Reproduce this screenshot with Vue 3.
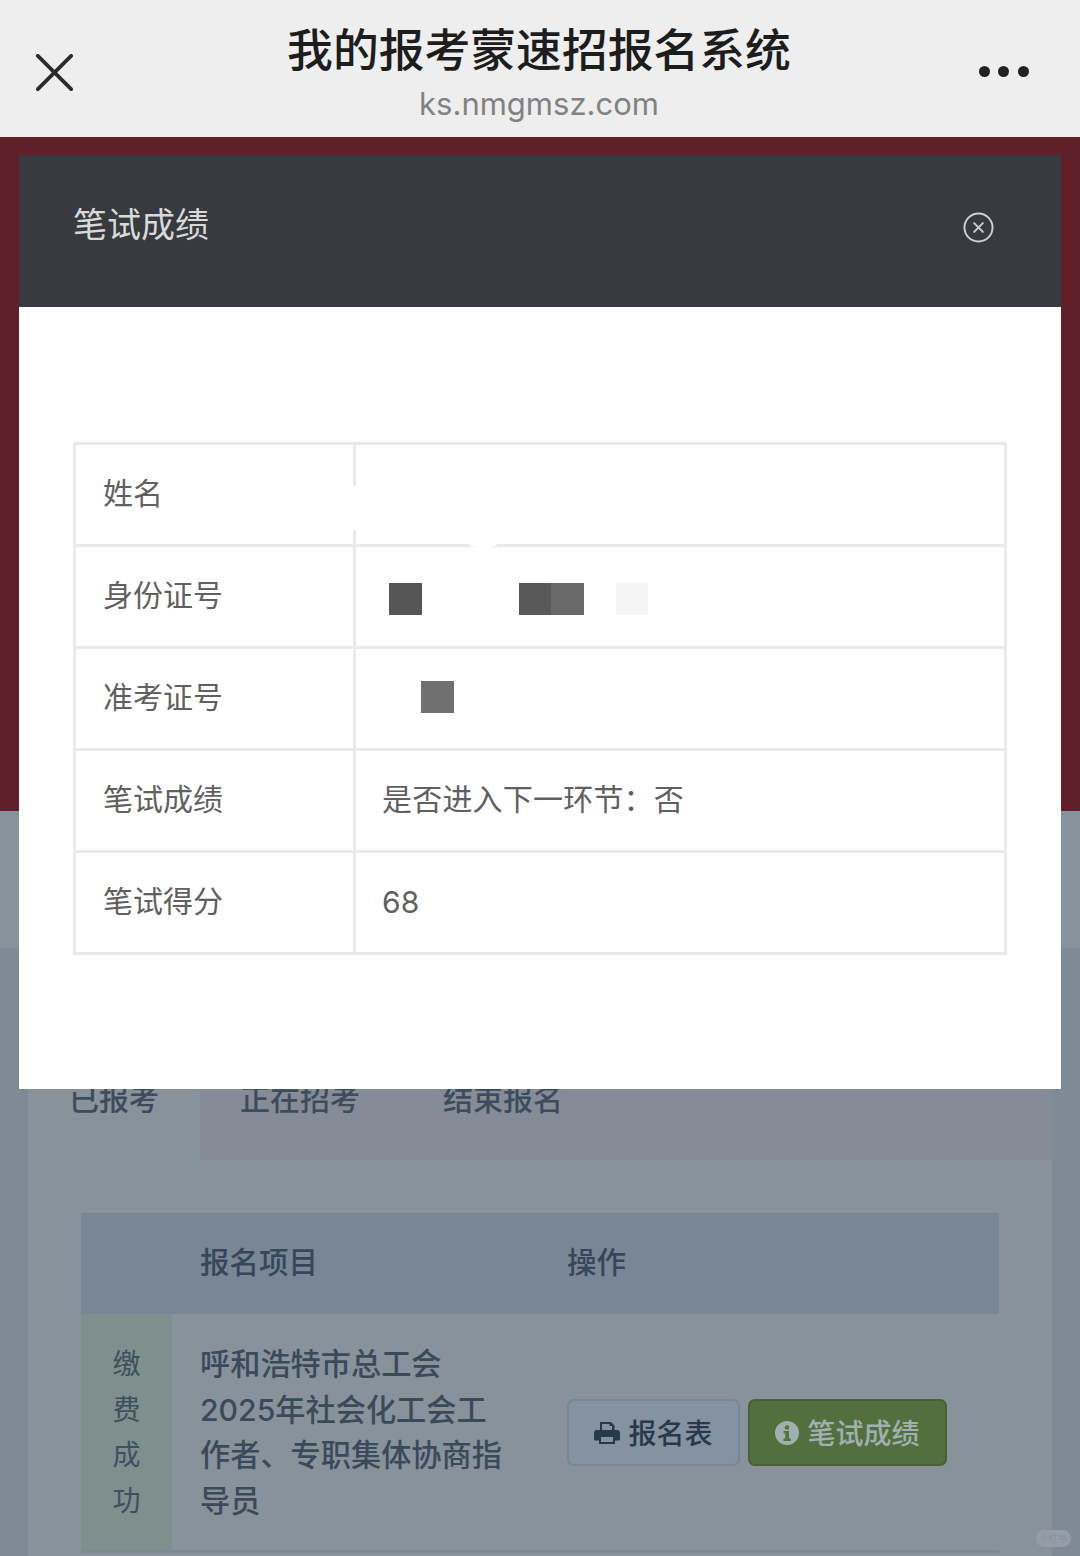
<script setup>
const rows = [
  { label: '姓名', kind: 'empty' },
  { label: '身份证号', kind: 'id' },
  { label: '准考证号', kind: 'ticket' },
  { label: '笔试成绩', value: '是否进入下一环节：否' },
  { label: '笔试得分', value: '68', numeric: true },
]
const projectLines = ['呼和浩特市总工会', '2025年社会化工会工', '作者、专职集体协商指', '导员']
const statusChars = ['缴', '费', '成', '功']
</script>

<template>
  <div class="screen">
    <header class="topbar">
      <svg class="close-x" viewBox="0 0 40 40" aria-hidden="true">
        <path d="M2 2 L38 38 M38 2 L2 38" />
      </svg>
      <div class="titles">
        <div class="title">我的报考蒙速招报名系统</div>
        <div class="domain">ks.nmgmsz.com</div>
      </div>
      <div class="dots"><i></i><i></i><i></i></div>
    </header>

    <main class="stage">
      <div class="hero"></div>
      <div class="band"></div>
      <section class="panel">
        <div class="tabs">
          <div class="tab active">已报考</div>
          <div class="tab-rest">
            <span>正在招考</span>
            <span>结束报名</span>
          </div>
        </div>
        <div class="list">
          <div class="list-head">
            <span class="h-project">报名项目</span>
            <span class="h-action">操作</span>
          </div>
          <div class="list-row">
            <div class="status">
              <span v-for="c in statusChars" :key="c">{{ c }}</span>
            </div>
            <div class="project">
              <div v-for="l in projectLines" :key="l">{{ l }}</div>
            </div>
            <div class="actions">
              <button class="btn btn-plain">
                <svg class="btn-icon" viewBox="0 0 26 24" aria-hidden="true">
                  <path d="M6 1h11l3.500 3.500V9H18V5h-2.500V3H8v6H6z" fill="#27394b" />
                  <path fill-rule="evenodd" d="M3 9h20a3 3 0 0 1 3 3v6a1.500 1.500 0 0 1-1.500 1.500H21V23H5v-3.500H1.500A1.500 1.500 0 0 1 0 18v-6a3 3 0 0 1 3-3zM7 16v5h12v-5z" fill="#27394b" />
                </svg>
                报名表
              </button>
              <button class="btn btn-green">
                <svg class="btn-icon info" viewBox="0 0 24 24" aria-hidden="true">
                  <circle cx="12" cy="12" r="12" fill="#a0afb0" />
                  <circle cx="12" cy="6.500" r="2.300" fill="#55733f" />
                  <path d="M8.500 10h5.500v7.500h1.800V20H8.500v-2.500h1.800v-5H8.500z" fill="#55733f" />
                </svg>
                笔试成绩
              </button>
            </div>
          </div>
          <div class="list-foot"></div>
        </div>
      </section>

      <div class="scroll-thumb"></div>
      <div class="watermark">小红书</div>

      <div class="modal">
        <div class="modal-head">
          <span class="modal-title">笔试成绩</span>
          <svg class="modal-close" viewBox="0 0 32 32" aria-hidden="true">
            <circle cx="16" cy="16" r="14.500" />
            <path d="M11.500 11.500 L20.500 20.500 M20.500 11.500 L11.500 20.500" />
          </svg>
        </div>
        <div class="modal-body">
          <div class="score-table">
            <div v-for="r in rows" :key="r.label" class="score-row">
              <div class="cell-label">{{ r.label }}</div>
              <div class="cell-value">
                <template v-if="r.kind === 'empty'">
                  <span class="patch patch-line"></span>
                  <span class="patch patch-rule"></span>
                </template>
                <template v-else-if="r.kind === 'id'">
                  <div class="mosaic id-mosaic">
                    <b class="m1"></b>
                    <b class="m2"></b>
                    <b class="m3"></b>
                    <b class="m4"></b>
                  </div>
                </template>
                <template v-else-if="r.kind === 'ticket'">
                  <div class="mosaic ticket-mosaic"><b class="m5"></b></div>
                </template>
                <span v-else-if="r.value" :class="{ num: r.numeric }">{{ r.value }}</span>
              </div>
            </div>
          </div>
        </div>
      </div>
    </main>
  </div>
</template>

<style>
html, body { margin: 0; padding: 0; background: #7e8b97; }
</style>

<style scoped>
.screen {
  width: 1080px;
  height: 1556px;
  overflow: hidden;
  display: flex;
  flex-direction: column;
  font-family: "Inter", "Noto Sans CJK SC", "Noto Sans", sans-serif;
}
.topbar {
  height: 137px;
  flex: none;
  background: #eeeeee;
  box-sizing: border-box;
  padding: 0 51px 0 36px;
  display: flex;
  align-items: center;
  justify-content: space-between;
}
.close-x {
  width: 37px;
  height: 37px;
  margin-top: 7px;
  fill: none;
  stroke: #2b2b2b;
  stroke-width: 4;
  stroke-linecap: round;
}
.titles {
  align-self: flex-start;
  padding-top: 19.500px;
  display: flex;
  flex-direction: column;
  align-items: center;
  margin-left: 26px;
}
.title {
  font-size: 45.800px;
  line-height: 62px;
  font-weight: 500;
  color: #1d1d1d;
}
.domain {
  font-size: 31px;
  line-height: 44px;
  color: #828282;
}
.dots {
  display: flex;
  gap: 8.500px;
  margin-top: 6px;
}
.dots i {
  width: 11px;
  height: 11px;
  border-radius: 50%;
  background: #222222;
}
.stage {
  position: relative;
  flex: 1;
  display: flex;
  flex-direction: column;
  background: #7e8b97;
  overflow: hidden;
}
.hero {
  height: 674px;
  flex: none;
  background: #5f202c;
}
.band {
  height: 137px;
  flex: none;
  background: #88929c;
}
.panel {
  margin: 0 27px;
  flex: 1;
  background: #87929b;
  border-left: 1px solid #808c97;
  border-right: 1px solid #808c97;
  box-sizing: border-box;
}
.tabs {
  display: flex;
  height: 212px;
  margin-bottom: 53px;
}
.tab {
  width: 172px;
  box-sizing: border-box;
  padding: 131px 0 0 41px;
  font-size: 30px;
  line-height: 40px;
  font-weight: 500;
  color: #3d4c5a;
}
.tab-rest {
  flex: 1;
  background: #858c97;
  display: flex;
  padding: 131px 0 0 40px;
  gap: 83px;
  font-size: 30px;
  line-height: 40px;
  font-weight: 500;
  color: #3d4c5a;
}
.list {
  margin: 0 53px 0 53px;
}
.list-head {
  height: 101px;
  box-sizing: border-box;
  padding-bottom: 8px;
  background: #798696;
  display: flex;
  align-items: center;
  font-size: 29.500px;
  font-weight: 500;
  color: #37465a;
}
.h-project {
  margin-left: 119px;
  width: 367px;
}
.list-row {
  height: 236px;
  display: flex;
}
.status {
  width: 91px;
  background: #7e8f8d;
  display: flex;
  flex-direction: column;
  align-items: center;
  justify-content: center;
  box-sizing: border-box;
  padding-top: 2px;
  font-size: 28px;
  line-height: 45.500px;
  color: #3e4f5d;
}
.project {
  width: 395px;
  box-sizing: border-box;
  padding: 2px 0 0 28px;
  display: flex;
  flex-direction: column;
  justify-content: center;
  font-size: 30.200px;
  line-height: 45.500px;
  font-weight: 500;
  color: #3b4a5a;
  white-space: nowrap;
}
.actions {
  display: flex;
  align-items: center;
  gap: 8px;
}
.btn {
  height: 67px;
  box-sizing: border-box;
  border-radius: 7px;
  font-family: inherit;
  font-size: 28px;
  font-weight: 500;
  display: flex;
  align-items: center;
  justify-content: center;
  padding: 0;
  gap: 8px;
}
.btn-plain {
  width: 173px;
  background: #8592a1;
  border: 2px solid #76879a;
  color: #27394b;
}
.btn-green {
  width: 199px;
  background: #52703d;
  border: 2px solid #466037;
  color: #a0afb0;
}
.btn-icon {
  width: 26px;
  height: 24px;
  flex: none;
  margin-top: 2px;
}
.info { width: 24px; margin-top: 1px; }
.list-foot {
  height: 3px;
  background: #7e8996;
}
.scroll-thumb {
  position: absolute;
  left: 25px;
  top: 543px;
  width: 11px;
  height: 120px;
  border-radius: 6px;
  background: #eeeeee;
}
.watermark {
  position: absolute;
  right: 9px;
  bottom: 9px;
  width: 35px;
  height: 17px;
  border-radius: 9px;
  background: #959ea7;
  color: #87919b;
  font-size: 9px;
  line-height: 17px;
  text-align: center;
}
.modal {
  position: absolute;
  left: 19px;
  top: 18px;
  width: 1042px;
  height: 934px;
  display: flex;
  flex-direction: column;
  background: #ffffff;
}
.modal-head {
  height: 152px;
  flex: none;
  background: #373a3f;
  box-sizing: border-box;
  padding: 0 67px 0 54px;
  display: flex;
  align-items: center;
  justify-content: space-between;
}
.modal-title {
  font-size: 34px;
  line-height: 48px;
  color: #d9d9d9;
  margin-top: -12px;
}
.modal-close {
  width: 31px;
  height: 31px;
  margin-top: -8px;
  fill: none;
  stroke: #cfcfcf;
  stroke-width: 2;
  stroke-linecap: round;
}
.modal-body {
  flex: 1;
  box-sizing: border-box;
  padding: 135px 54px 0;
}
.score-table {
  border: 3px solid #e8eaec;
  border-bottom-width: 0;
}
.score-row {
  display: flex;
  height: 102px;
  box-sizing: border-box;
  border-bottom: 3px solid #e8eaec;
}
.cell-label {
  width: 280px;
  box-sizing: border-box;
  padding: 0 0 7px 27px;
  border-right: 3px solid #e8eaec;
  display: flex;
  align-items: center;
  font-size: 30px;
  color: #606060;
  flex: none;
}
.cell-value {
  position: relative;
  flex: 1;
  box-sizing: border-box;
  padding: 0 0 7px 26px;
  display: flex;
  align-items: center;
  font-size: 30px;
  letter-spacing: 0.200px;
  color: #606060;
}
.num {
  margin-top: 6px;
}
.patch {
  position: absolute;
  background: #ffffff;
}
.patch-line {
  left: -4px;
  top: 41px;
  width: 24px;
  height: 44px;
}
.patch-rule {
  left: 113px;
  top: 98px;
  width: 28px;
  height: 4px;
  border-radius: 50%;
}
.mosaic {
  display: flex;
  align-items: center;
  margin-top: 12px;
}
.mosaic b {
  display: block;
  height: 32px;
  width: 32.500px;
}
.id-mosaic { margin-left: 7px; }
.m1 { background: #565656; margin-right: 97px; }
.m2 { background: #595959; }
.m3 { background: #696969; margin-right: 32px; }
.m4 { background: #f5f5f5; }
.ticket-mosaic { margin-left: 39px; margin-top: 3px; }
.m5 { background: #6f6f6f; }
</style>
